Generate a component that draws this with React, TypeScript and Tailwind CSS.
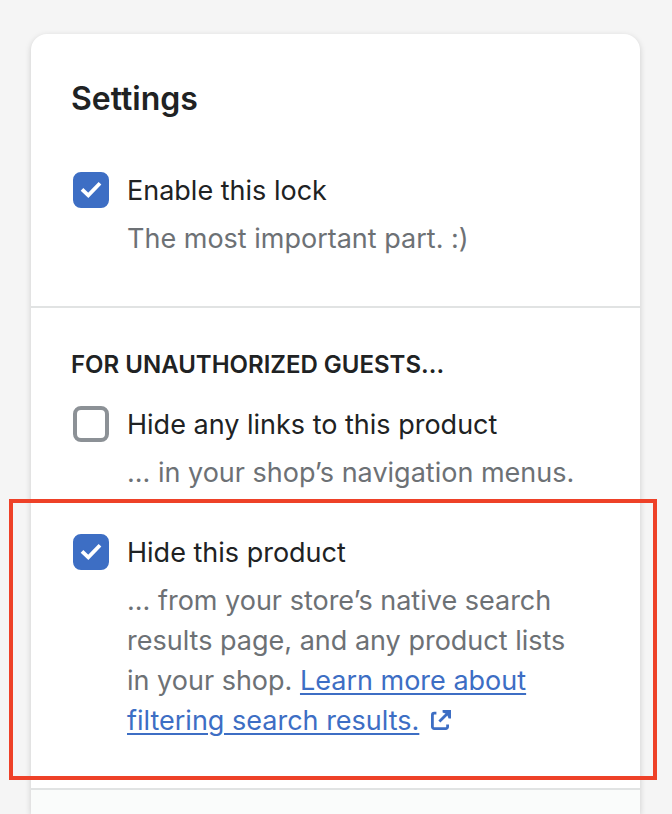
import type { ReactNode } from "react";

function Option({ id, title, checked = false, children }: { id: string; title: string; checked?: boolean; children: ReactNode }) {
  return (
    <div className="flex gap-[18px] pl-[2px]">
      <span className="mt-px grid h-9 w-9 shrink-0">
        <input
          id={id}
          type="checkbox"
          defaultChecked={checked}
          aria-describedby={id + "-help"}
          className="peer col-start-1 row-start-1 h-9 w-9 appearance-none rounded-lg border-4 border-[#8c9196] bg-white checked:border-[#3d6ec4] checked:bg-[#3d6ec4]"
        />
        <svg viewBox="0 0 36 36" className="pointer-events-none invisible col-start-1 row-start-1 h-9 w-9 peer-checked:visible" fill="none" stroke="#fff" strokeWidth="3.8">
          <path d="M9 17.4L15.3 23.4L27 11.2" />
        </svg>
      </span>
      <div className="min-w-0 flex-1 pr-2">
        <label htmlFor={id} className="block">{title}</label>
        <p id={id + "-help"} className="mt-2 text-[#6d7175]">{children}</p>
      </div>
    </div>
  );
}

export default function App() {
  return (
    <main className="flex min-h-screen flex-col bg-[#f5f5f5] pt-[34px] pr-8 pl-[31px] font-['Inter',sans-serif] text-[27px] leading-10 text-[#202223]">
      <div className="flex flex-1 flex-col rounded-t-2xl bg-white shadow-[0_2px_6px_rgba(0,0,0,0.17)]">
        <section className="px-10 pt-10 pb-[47px]">
          <h1 className="text-[32px] leading-[50px] font-semibold">Settings</h1>
          <div className="mt-[47px]">
            <Option id="enable" title="Enable this lock" checked>The most important part. :)</Option>
          </div>
        </section>
        <section className="border-t-2 border-[#e1e3e3] px-10 pt-10">
          <h2 className="text-[24px] leading-[34px] font-semibold uppercase">For unauthorized guests...</h2>
          <div className="mt-[23px]">
            <Option id="links" title="Hide any links to this product">... in your shop’s navigation menus.</Option>
          </div>
        </section>
        <section className="relative px-10 pt-10 pb-[47px]">
          <Option id="product" title="Hide this product" checked>
            ... from your store’s native search results page, and any product lists in your shop.{" "}
            <a href="#learn" className="text-[#3d6ec4]">
              <span className="underline decoration-2 underline-offset-3">Learn more about filtering search results.</span>
              <svg viewBox="0 0 20 20" aria-hidden="true" className="ml-3 inline-block h-5 w-5 align-baseline" fill="none" stroke="currentColor" strokeWidth="2.8">
                <path d="M5.4 3.2H3.2A1.8 1.8 0 0 0 1.4 5v11.8A1.8 1.8 0 0 0 3.2 18.6h11.6a1.8 1.8 0 0 0 1.8-1.8v-2.3" />
                <path d="M8.4 11.6L17.5 2.5" />
                <path d="M11.6 0H20v8.6h-2.4L16.4 5.6L14.4 3.6L11.6 2.4z" fill="currentColor" stroke="none" />
              </svg>
            </a>
          </Option>
          <div className="pointer-events-none absolute top-[6px] -right-[17px] bottom-2 -left-[22px] border-4 border-[#ee4128]" />
        </section>
        <div className="min-h-6 flex-1 border-t-2 border-[#e1e3e3] bg-[#fafcfb]" />
      </div>
    </main>
  );
}
